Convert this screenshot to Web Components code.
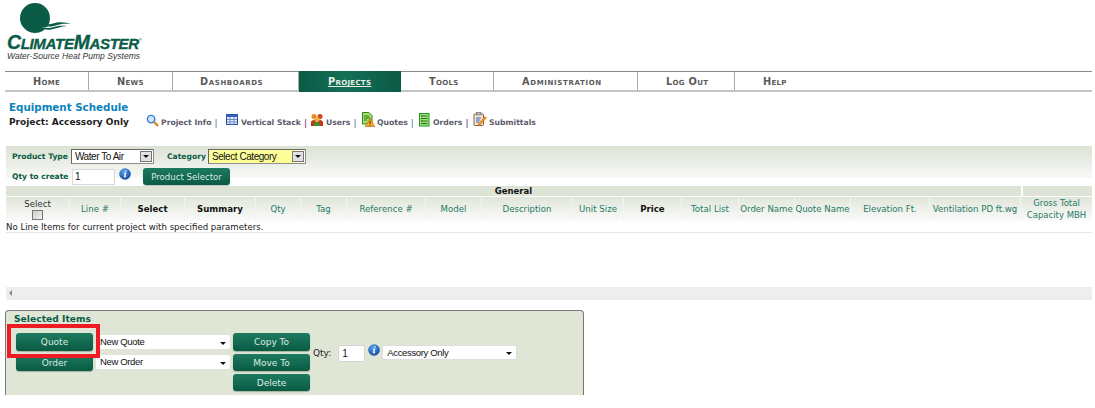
<!DOCTYPE html>
<html><head><meta charset="utf-8"><title>Equipment Schedule</title>
<style>
html,body{margin:0;padding:0;background:#fff;overflow:hidden}
body{font-family:"DejaVu Sans",Verdana,sans-serif;font-size:9px;color:#222;height:408px}
</style></head><body>
<cm-page></cm-page>
<template id="t-page"><style>
:host{display:block;position:relative;width:1095px;height:408px;overflow:hidden}
.wrap{display:flex;flex-direction:column}
.annot{position:absolute;left:7px;top:324px;width:85px;height:26px;border:4px solid #ed1c24;pointer-events:none}
</style><div class="wrap"><cm-logo></cm-logo><cm-nav></cm-nav><cm-title></cm-title><cm-filter></cm-filter><cm-grid></cm-grid><cm-scroll></cm-scroll><cm-selected></cm-selected></div><div class="annot"></div></template>

<template id="t-logo"><style>
:host{display:block;height:71px;position:relative;box-sizing:border-box;padding:3px 0 0 7px}
svg{display:block;margin-left:13px}
.w{font:italic 700 19.4px/14px "Liberation Sans",sans-serif;color:#0b5c47;letter-spacing:-.35px;margin-top:-1px;height:15px;white-space:nowrap;-webkit-text-stroke:.35px #0b5c47}
.w b{font-size:15.1px;font-weight:700}
.w sup{font-size:4px;vertical-align:8px;letter-spacing:0;-webkit-text-stroke:0}
.t{font:italic 8.5px/10px "Liberation Sans",sans-serif;color:#333;letter-spacing:.04px;margin-top:3px;white-space:nowrap}
</style>
<svg width="54" height="31" viewBox="0 0 54 31"><defs><clipPath id="c"><path d="M0 0H54V20.5C44 18.5 37 19 30 23 28 24 25 24.500 22 24.500L30 31H0Z"/></clipPath></defs>
<circle cx="15" cy="15" r="15" fill="#0b5c47" clip-path="url(#c)"/>
<path d="M8 20.500C16 19 24 23 33 20.500 40 18 46 19.500 52 21 46 20.500 41 20.500 34 23 27 25 17 21.500 8 20.500Z" fill="#0b5c47"/>
<path d="M10 24C18 23 26 26.500 34 24 38 22.700 42 22.500 47 23 41 23.500 37 25.500 31 26.500 24 27.500 17 24.500 10 24Z" fill="#0b5c47"/></svg>
<div class="w">C<b>LIMATE</b>M<b>ASTER</b><sup>®</sup></div><div class="t">Water-Source Heat Pump Systems</div></template>

<template id="t-nav"><style>
:host{display:block;margin-left:5px;width:1087px;box-sizing:border-box;border-top:1px solid #8a8a8a;border-bottom:2px solid #c4c4c4;height:21px}
.r{display:grid;grid-template-columns:84px 84px 126px 102px 93px 144px 97px 1fr;height:18px}
</style><div class="r"><cm-tab>Home</cm-tab><cm-tab>News</cm-tab><cm-tab style="padding-left:27px;letter-spacing:.6px">Dashboards</cm-tab><cm-tab active>Projects</cm-tab><cm-tab>Tools</cm-tab><cm-tab style="letter-spacing:.65px">Administration</cm-tab><cm-tab>Log Out</cm-tab><cm-tab last>Help</cm-tab></div></template>

<template id="t-tab"><style>
:host{display:flex;align-items:center;justify-content:flex-start;padding:2px 0 0 28px;box-sizing:border-box;border-right:1px solid #a9a9a9;font:700 9.800px/12px "DejaVu Sans",sans-serif;font-variant:small-caps;color:#5a5a5a;letter-spacing:.3px;white-space:nowrap}
:host([last]){border-right:0}
:host([active]){background:linear-gradient(90deg,#0b5a45,#136f56 45%,#0b5a45);color:#e4efe8;border-right:0;text-decoration:underline;margin:-1px 0 -2px;height:21px;padding:1px 0 0 29px}
</style><slot></slot></template>

<template id="t-title"><style>
:host{display:block;box-sizing:border-box;height:54px;padding:8px 0 0 9px;position:relative}
.a{font:700 10.300px/14px "DejaVu Sans",sans-serif;color:#0b83bd}
.row{display:flex;align-items:flex-end;margin-top:1px;height:14px}
.p{font:700 9px/14px "DejaVu Sans",sans-serif;color:#1d1d1d;width:137px;flex:none}
.ls{display:flex;align-items:flex-end;color:#5b5b6b;font:700 7.700px/10px "DejaVu Sans",sans-serif;margin-bottom:1px}
.i{display:flex;align-items:flex-end;white-space:nowrap;flex:none}
svg{display:block;margin-right:2px;margin-bottom:1px;flex:none}
.s{margin:0 0 0 3px;font-weight:400;font-size:9px;line-height:10px}
</style>
<div class="a">Equipment Schedule</div>
<div class="row"><div class="p" style="width:137px">Project: Accessory Only</div><div class="ls">
<span class="i" style="width:80px"><svg width="13" height="13" viewBox="0 0 14 14"><circle cx="5.500" cy="5.500" r="4" fill="#cfe6fb" stroke="#2f7fd0" stroke-width="1.500"/><path d="M8.500 8.500 13 13" stroke="#d98a1e" stroke-width="2.400"/></svg>Project Info<span class="s" style="color:#5a6a80">|</span></span>
<span class="i" style="width:84px"><svg width="13" height="12" viewBox="0 0 13 12" style="margin-bottom:2px"><rect x=".5" y=".5" width="11" height="10" fill="#dfe8f8" stroke="#2f4f9f"/><rect x=".5" y=".5" width="11" height="2.500" fill="#3a5fb5"/><path d="M4 3V10M8 3V10M1 5.500H11M1 8H11" stroke="#6f8fcf"/></svg>Vertical Stack<span class="s" style="color:#7a1f5f">|</span></span>
<span class="i" style="width:51px"><svg width="14" height="14" viewBox="0 0 14 14"><circle cx="4" cy="3.500" r="2.500" fill="#e58a1e"/><circle cx="10" cy="3.500" r="2.500" fill="#d8431f"/><circle cx="7" cy="6.500" r="2.500" fill="#f0b040"/><path d="M1 13V8.500L4 6.500 6 9 8 9 10 6.500 13 8.500V13Z" fill="#c0391b"/><path d="M4 13V10L7 9 10 10V13Z" fill="#3d8f2f"/></svg>Users<span class="s" style="color:#5a6a80">|</span></span>
<span class="i" style="width:57px"><svg width="14" height="15" viewBox="0 0 14 15"><path d="M1.500 .5H8L11 3.500V12H1.500Z" fill="#a9dd6a" stroke="#2c8a1c"/><path d="M3 4H8M3 6H9M3 8H6" stroke="#2c7a1c"/><path d="M9 6.500 13.800 14.500H4.200Z" fill="#f4b21f" stroke="#b5560f" stroke-width=".6"/><path d="M9 9V12M9 12.800V13.800" stroke="#5a2a0a"/></svg>Quotes<span class="s" style="color:#4a76a8">|</span></span>
<span class="i" style="width:55px"><svg width="13" height="14" viewBox="0 0 13 14"><rect x="1.500" y=".5" width="9.500" height="12.500" fill="#9fe07a" stroke="#1d9a1d"/><path d="M3 3H9.500M3 5.500H9.500M3 8H9.500M3 10.500H9.500" stroke="#1c7a1c"/><path d="M3 3H4.500M3 8H4.500" stroke="#c33"/></svg>Orders<span class="s" style="color:#3a1a7a">|</span></span>
<span class="i"><svg width="14" height="15" viewBox="0 0 14 15"><rect x="1" y="2" width="9.500" height="11.500" rx="1" fill="#f2ead8" stroke="#8a5a3a"/><rect x="3.500" y=".5" width="4.500" height="2.500" fill="#b9b9c9" stroke="#6a5a6a" stroke-width=".6"/><path d="M3 6H8M3 8H7M3 10H6" stroke="#3a5fb5"/><path d="M5 12 12 4.500 13.500 6 6.500 13.500Z" fill="#f0a020" stroke="#b4501f" stroke-width=".5"/></svg>Submittals</span>
</div></div></template>

<template id="t-filter"><style>
:host{display:block;margin-left:6px;width:1086px;height:32px;box-sizing:border-box;background:linear-gradient(#dbe2d3,#f7f8f6 95%);padding:3px 0 0 6px;font:700 7.600px/12px "DejaVu Sans",sans-serif;color:#0b5c47;margin-bottom:8px}
.r{display:flex;align-items:center;height:15px;white-space:nowrap}
.r2{margin-top:4px;height:17px}
.sel{box-sizing:border-box;height:15px;border:1px solid #8f8f8f;border-top-color:#666;border-left-color:#666;background:#fff;display:flex;align-items:center;font:10px/12px "Liberation Sans",sans-serif;letter-spacing:-.45px;color:#111;padding-left:3px;position:relative;justify-content:space-between;padding-right:1px}
.sel i{box-sizing:border-box;width:12px;height:11px;background:#e2e2e2;border:1px solid #777;display:flex;align-items:center;justify-content:center}
.sel i::after{content:"";border:3px solid transparent;border-top:3px solid #111;border-bottom:0}
.y{background:linear-gradient(90deg,#ffff99,#ffff99 85%,#fff)}
input{box-sizing:border-box;width:43px;height:16px;border:1px solid #d8d8d8;font:10px "Liberation Sans",sans-serif;padding:0 0 0 2px;margin:0;color:#111;background:#fff;outline:0}
</style>
<div class="r"><span style="width:59px">Product Type</span><div class="sel" style="width:83px">Water To Air<i></i></div><span style="margin-left:13px;width:41px">Category</span><div class="sel y" style="width:98px">Select Category<i></i></div></div>
<div class="r r2"><span style="width:60px">Qty to create</span><input value="1" aria-label="Qty to create"><cm-info style="margin:-5px 0 0 4px"></cm-info><cm-btn style="margin-left:12px;width:87px;height:17px;font-size:8.600px">Product Selector</cm-btn></div></template>

<template id="t-info"><style>
:host{display:inline-block;width:12px;height:12px;flex:none}
svg{display:block}
</style><svg width="12" height="12" viewBox="0 0 12 12"><defs><radialGradient id="ig" cx=".4" cy=".3" r=".8"><stop offset="0" stop-color="#5aa4f0"/><stop offset="1" stop-color="#0b3f96"/></radialGradient></defs><circle cx="6" cy="6" r="5.800" fill="url(#ig)"/><path d="M6.500 2.300h1.300l-.3 1.300H6.200ZM5.800 4.500H7.300L6.400 8.500 7.300 8.200 7.200 9 5.200 9.600 4.900 9 5.700 5.400 4.900 5.500Z" fill="#fff"/></svg></template>

<template id="t-btn"><style>
:host{display:inline-flex;align-items:center;justify-content:center;box-sizing:border-box;border-radius:3px;background:linear-gradient(#1d7b5e,#0a5a44);color:#dcebe3;font:9px/12px "DejaVu Sans",sans-serif;white-space:nowrap;box-shadow:0 1px 1px rgba(60,80,60,.35);flex:none}
</style><slot></slot></template>

<template id="t-grid"><style>
:host{display:block;margin-left:6px;width:1086px;font:8.600px/12px "DejaVu Sans",sans-serif;color:#1f7a66}
.top{display:grid;grid-template-columns:1015px 1fr;height:11px;gap:0}
.top div{background:#dde3d5;text-align:center;color:#111;font-weight:700;font-size:8.500px;line-height:10px;height:10px}
.top div+div{margin-left:2px}
.head{display:grid;grid-template-columns:64px 51px 64px 71px 45px 46px 79px 56px 91px 51px 58px 57px 56px 56px 79px 91px 1fr;height:24px}
.empty{height:11px;border-bottom:1px solid #e6e6e6;font:8.600px/12px "DejaVu Sans",sans-serif;color:#222;white-space:nowrap;padding-left:0;box-sizing:content-box}
</style><div class="top"><div>General</div><div></div></div>
<div class="head"><cm-th dark><span>Select<input-box></input-box></span></cm-th><cm-th>Line #</cm-th><cm-th bold>Select</cm-th><cm-th bold>Summary</cm-th><cm-th>Qty</cm-th><cm-th>Tag</cm-th><cm-th>Reference #</cm-th><cm-th>Model</cm-th><cm-th>Description</cm-th><cm-th>Unit Size</cm-th><cm-th bold>Price</cm-th><cm-th>Total List</cm-th><cm-th>Order Name</cm-th><cm-th>Quote Name</cm-th><cm-th>Elevation Ft.</cm-th><cm-th>Ventilation PD ft.wg</cm-th><cm-th last>Gross Total Capacity MBH</cm-th></div>
<div class="empty">No Line Items for current project with specified parameters.</div></template>

<template id="t-th"><style>
:host{display:flex;align-items:center;justify-content:center;text-align:center;box-sizing:border-box;background:linear-gradient(#e0e6da,#fbfbfa);border-right:1px solid #f2f4ef;height:24px;line-height:12px;white-space:nowrap}
:host([bold]){font-weight:700;color:#111}
:host([dark]){color:#333;line-height:11px}
:host([last]){border-right:0;white-space:normal;font-size:8.500px}
span,slot{display:block}
</style><slot></slot></template>

<template id="t-box"><style>
:host{display:block;box-sizing:border-box;width:11px;height:10px;margin:0 auto;border:1px solid #777;background:linear-gradient(135deg,#ccc,#f2f2f2)}
</style></template>

<template id="t-scroll"><style>
:host{display:block;margin:54px 0 10px 6px;width:1086px;height:13px;background:#eee;position:relative}
i{display:block;width:0;height:0;margin:0;position:relative;left:3px;top:3px;border:3.500px solid transparent;border-left:0;border-right:3.500px solid #888;}
</style><i></i></template>

<template id="t-selected"><style>
:host{display:block;box-sizing:border-box;margin-left:5px;width:579px;height:85px;background:#dfe6d6;border:1px solid #777;border-radius:4px 4px 0 0;border-bottom:0;padding:2px 0 0 8px;position:relative;font:9px/12px "DejaVu Sans",sans-serif}
h3{margin:0;font:700 9.100px/12px "DejaVu Sans",sans-serif;color:#0b5c47;letter-spacing:.05px}
.g{display:grid;grid-template-columns:80px 137px 77px 1fr;column-gap:0;margin-top:8px;margin-left:2px;align-items:start}
.c1,.c3{display:flex;flex-direction:column;gap:3px}
.c2{display:flex;flex-direction:column;gap:6px;padding:2px 0 0 0}
.sel{box-sizing:border-box;width:134px;height:14px;background:#fff;border-radius:2px;display:flex;align-items:center;justify-content:space-between;font:9.500px/12px "Liberation Sans",sans-serif;letter-spacing:-.35px;color:#111;padding:0 2px 0 4px}
.sel i{border:3px solid transparent;border-top:3px solid #111;border-bottom:0;margin-right:2px;margin-top:2px}
.q{display:flex;align-items:flex-start;margin-left:3px;color:#222}
.q span{margin-top:14px}
input{box-sizing:border-box;width:27px;height:17px;border:1px solid #d3d3d3;border-radius:2px;font:10px "Liberation Sans",sans-serif;padding:0 0 0 3px;margin:12px 0 0 7px;color:#111;background:#fff;outline:0}
.sel.w{width:135px;margin:12px 0 0 2px;height:15px;border:1px solid #ddd}
</style><h3>Selected Items</h3>
<div class="g">
<div class="c1"><cm-btn style="width:77px;height:18px">Quote</cm-btn><cm-btn style="width:77px;height:17px">Order</cm-btn></div>
<div class="c2"><div class="sel">New Quote<i></i></div><div class="sel">New Order<i></i></div></div>
<div class="c3"><cm-btn style="width:77px;height:18px">Copy To</cm-btn><cm-btn style="width:77px;height:17px">Move To</cm-btn><cm-btn style="width:77px;height:17px">Delete</cm-btn></div>
<div class="q"><span>Qty:</span><input value="1" aria-label="Qty"><cm-info style="margin:11px 0 0 3px"></cm-info><div class="sel w">Accessory Only<i></i></div></div>
</div></template>

<script>
const map={'cm-page':'t-page','cm-logo':'t-logo','cm-nav':'t-nav','cm-tab':'t-tab','cm-title':'t-title','cm-filter':'t-filter','cm-info':'t-info','cm-btn':'t-btn','cm-grid':'t-grid','cm-th':'t-th','input-box':'t-box','cm-scroll':'t-scroll','cm-selected':'t-selected'};
for(const [tag,id] of Object.entries(map)){
  customElements.define(tag,class extends HTMLElement{
    constructor(){super();this.attachShadow({mode:'open'}).appendChild(document.getElementById(id).content.cloneNode(true));}
  });
}
</script>
</body></html>
